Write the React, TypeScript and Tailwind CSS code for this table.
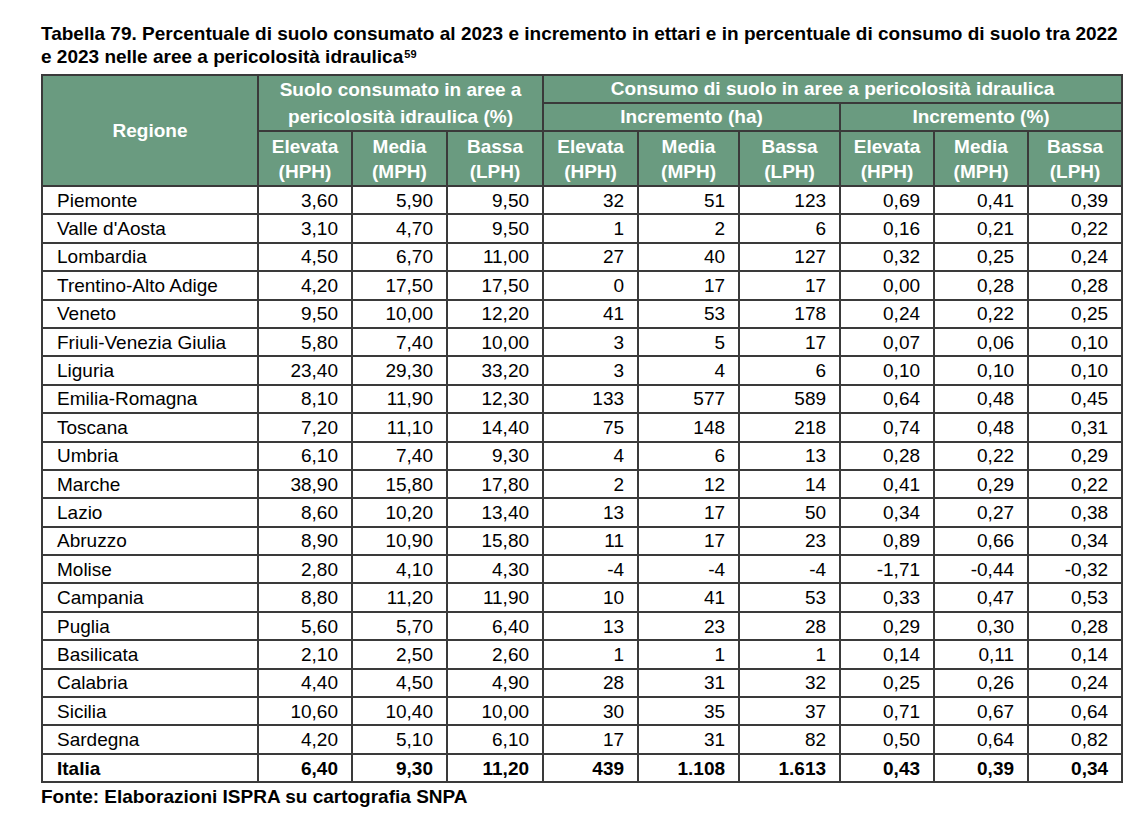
const rows: [string, string[], string[], string[]][] = [
  ["Piemonte", ["3,60", "5,90", "9,50"], ["32", "51", "123"], ["0,69", "0,41", "0,39"]],
  ["Valle d'Aosta", ["3,10", "4,70", "9,50"], ["1", "2", "6"], ["0,16", "0,21", "0,22"]],
  ["Lombardia", ["4,50", "6,70", "11,00"], ["27", "40", "127"], ["0,32", "0,25", "0,24"]],
  ["Trentino-Alto Adige", ["4,20", "17,50", "17,50"], ["0", "17", "17"], ["0,00", "0,28", "0,28"]],
  ["Veneto", ["9,50", "10,00", "12,20"], ["41", "53", "178"], ["0,24", "0,22", "0,25"]],
  ["Friuli-Venezia Giulia", ["5,80", "7,40", "10,00"], ["3", "5", "17"], ["0,07", "0,06", "0,10"]],
  ["Liguria", ["23,40", "29,30", "33,20"], ["3", "4", "6"], ["0,10", "0,10", "0,10"]],
  ["Emilia-Romagna", ["8,10", "11,90", "12,30"], ["133", "577", "589"], ["0,64", "0,48", "0,45"]],
  ["Toscana", ["7,20", "11,10", "14,40"], ["75", "148", "218"], ["0,74", "0,48", "0,31"]],
  ["Umbria", ["6,10", "7,40", "9,30"], ["4", "6", "13"], ["0,28", "0,22", "0,29"]],
  ["Marche", ["38,90", "15,80", "17,80"], ["2", "12", "14"], ["0,41", "0,29", "0,22"]],
  ["Lazio", ["8,60", "10,20", "13,40"], ["13", "17", "50"], ["0,34", "0,27", "0,38"]],
  ["Abruzzo", ["8,90", "10,90", "15,80"], ["11", "17", "23"], ["0,89", "0,66", "0,34"]],
  ["Molise", ["2,80", "4,10", "4,30"], ["-4", "-4", "-4"], ["-1,71", "-0,44", "-0,32"]],
  ["Campania", ["8,80", "11,20", "11,90"], ["10", "41", "53"], ["0,33", "0,47", "0,53"]],
  ["Puglia", ["5,60", "5,70", "6,40"], ["13", "23", "28"], ["0,29", "0,30", "0,28"]],
  ["Basilicata", ["2,10", "2,50", "2,60"], ["1", "1", "1"], ["0,14", "0,11", "0,14"]],
  ["Calabria", ["4,40", "4,50", "4,90"], ["28", "31", "32"], ["0,25", "0,26", "0,24"]],
  ["Sicilia", ["10,60", "10,40", "10,00"], ["30", "35", "37"], ["0,71", "0,67", "0,64"]],
  ["Sardegna", ["4,20", "5,10", "6,10"], ["17", "31", "82"], ["0,50", "0,64", "0,82"]],
];

const totale: [string, string[], string[], string[]] = [
  "Italia",
  ["6,40", "9,30", "11,20"],
  ["439", "1.108", "1.613"],
  ["0,43", "0,39", "0,34"],
];

const widths = [216, 94, 95, 96, 95, 101, 101, 94, 94, 94];

const levels = [
  ["Elevata", "(HPH)"],
  ["Media", "(MPH)"],
  ["Bassa", "(LPH)"],
];

const th = "border-2 border-[#3a3a3a] bg-[#6a9b80] text-white font-bold text-center p-0";
const td = "border-2 border-[#3a3a3a] p-0";

const DataRow = ({ r, bold }: { r: [string, string[], string[], string[]]; bold?: boolean }) => (
  <tr className={`h-[28.4px] ${bold ? "font-bold" : ""}`}>
    <td className={`${td} pl-[14px] text-left`}>{r[0]}</td>
    {[...r[1], ...r[2], ...r[3]].map((v, i) => (
      <td key={i} className={`${td} pr-[13px] text-right`}>
        {v}
      </td>
    ))}
  </tr>
);

export default function App() {
  return (
    <div
      className="min-h-screen bg-white text-black px-[41px] pt-[22px] text-[19px] leading-[23px]"
      style={{ fontFamily: '"Liberation Sans", Arial, sans-serif' }}
    >
      <p className="font-bold whitespace-nowrap mb-[6px]">
        Tabella 79. Percentuale di suolo consumato al 2023 e incremento in ettari e in percentuale di consumo di suolo tra 2022
        <br />
        e 2023 nelle aree a pericolosità idraulica
        <span className="text-[11px] leading-none relative -top-[5px] ml-[1px]">59</span>
      </p>

      <table className="table-fixed border-collapse w-[1081px]">
        <colgroup>
          {widths.map((w, i) => (
            <col key={i} style={{ width: w }} />
          ))}
        </colgroup>
        <thead>
          <tr className="h-[28px] leading-[26px]">
            <th rowSpan={3} className={th}>
              Regione
            </th>
            <th rowSpan={2} colSpan={3} className={`${th} leading-[27px]`}>
              Suolo consumato in aree a
              <br />
              pericolosità idraulica (%)
            </th>
            <th colSpan={6} className={th}>
              Consumo di suolo in aree a pericolosità idraulica
            </th>
          </tr>
          <tr className="h-[28px] leading-[26px]">
            <th colSpan={3} className={th}>
              Incremento (ha)
            </th>
            <th colSpan={3} className={th}>
              Incremento (%)
            </th>
          </tr>
          <tr className="h-[55px] leading-[25px]">
            {[0, 1, 2].flatMap((g) =>
              levels.map((l, i) => (
                <th key={`${g}-${i}`} className={th}>
                  {l[0]}
                  <br />
                  {l[1]}
                </th>
              ))
            )}
          </tr>
        </thead>
        <tbody>
          {rows.map((r) => (
            <DataRow key={r[0]} r={r} />
          ))}
          <DataRow r={totale} bold />
        </tbody>
      </table>

      <p className="font-bold mt-[2px]">Fonte: Elaborazioni ISPRA su cartografia SNPA</p>
    </div>
  );
}
